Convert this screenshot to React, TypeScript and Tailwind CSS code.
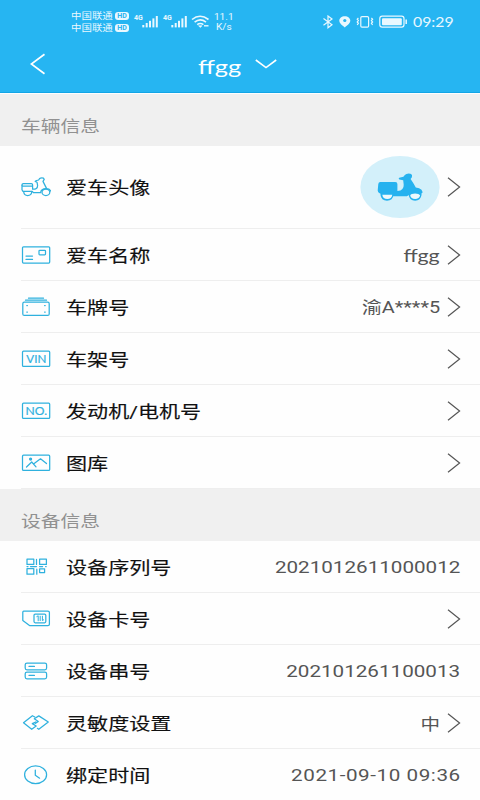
import type { ReactNode } from 'react';
import clsx from 'clsx';

type Row = {
  label: string;
  icon: ReactNode;
  value?: string;
  valueClass?: string;
  link?: boolean;
};

function LineIcon({ children }: { children: ReactNode }) {
  return (
    <svg
      viewBox="0 0 30 24"
      className="w-[30px] h-6 shrink-0"
      fill="none"
      stroke="#2fb1de"
      strokeWidth="1.25"
      strokeLinecap="round"
      strokeLinejoin="round"
    >
      {children}
    </svg>
  );
}

function Arrow() {
  return (
    <svg viewBox="0 0 14 20" className="w-[14px] h-5 ml-[7px] shrink-0" fill="none" stroke="#555" strokeWidth="1.2">
      <path d="M1 0.8 L12.6 10 L1 19.2" />
    </svg>
  );
}

const frame = <rect x="1.5" y="4.2" width="27.2" height="15.2" rx="1" />;

const vehicleRows: Row[] = [
  {
    label: '爱车名称',
    value: 'ffgg',
    valueClass: 'pt-0.5 text-[17.5px] scale-x-[1.22] font-[Lato,sans-serif]',
    link: true,
    icon: (
      <LineIcon>
        <rect x="1.5" y="3.8" width="27.2" height="16.2" rx="1" />
        <rect x="18" y="7.3" width="6.5" height="4.6" rx="0.8" />
        <path d="M5 13h6.5M5 16.4h6.5" />
      </LineIcon>
    ),
  },
  {
    label: '车牌号',
    value: '渝A****5',
    valueClass: 'pt-1 text-[16.3px] scale-x-[1.22]',
    link: true,
    icon: (
      <LineIcon>
        <rect x="1.8" y="7.2" width="26.4" height="13.2" rx="1.5" />
        <path d="M4.5 5.2h21M7.5 3.2h15" />
        <path d="M5.8 10.5h.6M23.6 10.5h.6M5.8 17h.6M23.6 17h.6" />
      </LineIcon>
    ),
  },
  {
    label: '车架号',
    link: true,
    icon: (
      <LineIcon>
        {frame}
        <text x="15.3" y="15.7" textAnchor="middle" textLength="20" lengthAdjust="spacingAndGlyphs" fontFamily="Lato, sans-serif" fontSize="11" fill="#2fb1de" strokeWidth="0.2">VIN</text>
      </LineIcon>
    ),
  },
  {
    label: '发动机/电机号',
    link: true,
    icon: (
      <LineIcon>
        {frame}
        <text x="15.3" y="15.6" textAnchor="middle" textLength="21.5" lengthAdjust="spacingAndGlyphs" fontFamily="Lato, sans-serif" fontSize="10.8" fill="#2fb1de" strokeWidth="0.2">NO.</text>
      </LineIcon>
    ),
  },
  {
    label: '图库',
    link: true,
    icon: (
      <LineIcon>
        {frame}
        <circle cx="9.6" cy="8" r="1" fill="#2fb1de" />
        <path d="M5.5 16L10.7 11L15 15.8M12.5 13L19.5 7.8L25.5 12.6" />
      </LineIcon>
    ),
  },
];

const deviceRows: Row[] = [
  {
    label: '设备序列号',
    value: '2021012611000012',
    valueClass: 'pt-1 mr-px text-[16.5px] scale-x-[1.25]',
    icon: (
      <LineIcon>
        <rect x="6" y="4.2" width="6.8" height="5.2" />
        <rect x="18.6" y="4.2" width="6.8" height="5.2" />
        <rect x="6" y="13.6" width="6.8" height="5.6" />
        <rect x="18.6" y="13.8" width="5" height="3.8" />
        <path d="M15.5 4.4v5M6 11.6h1M9.5 11.6h6M18.6 11.6h3M24.6 11.6h.6M15.8 14.2v5" />
      </LineIcon>
    ),
  },
  {
    label: '设备卡号',
    link: true,
    icon: (
      <LineIcon>
        <path d="M2.7 4.2h24.2q1.5 0 1.5 1.3v11.7q0 1.3-1.5 1.3H8.5L1.8 13.4V5.2q0-1 .9-1z" />
        <rect x="13" y="7" width="11.8" height="8.8" rx="1.2" />
        <path d="M15.8 9.6l1.4-.8v5M19.2 9.2v4.4M21.4 9.2v4.4l1.2-.8" strokeWidth="1" />
      </LineIcon>
    ),
  },
  {
    label: '设备串号',
    value: '202101261100013',
    valueClass: 'pt-1 mr-px text-[16.5px] scale-x-[1.25]',
    icon: (
      <LineIcon>
        <rect x="4.2" y="4" width="21.4" height="6.8" rx="1.8" />
        <rect x="4.2" y="13" width="21.4" height="6.8" rx="1.8" />
        <path d="M8 7.4h5.4M8 16.4h5.4" />
      </LineIcon>
    ),
  },
  {
    label: '灵敏度设置',
    value: '中',
    valueClass: 'pt-1 text-[16px] scale-x-[1.22]',
    link: true,
    icon: (
      <LineIcon>
        <path d="M13.8 6L11.4 4.7L2.5 11.7L10.7 18.3L15.2 15L11.3 12.6L14.7 11" />
        <path d="M13.3 7.8L17.8 4.9L27.3 11L17.8 18.3L16.4 17.3M13.3 7.8L17.3 10.4L14.2 12.4" />
      </LineIcon>
    ),
  },
  {
    label: '绑定时间',
    value: '2021-09-10 09:36',
    valueClass: 'pt-1 text-[16.5px] tracking-[0.45px] scale-x-[1.25]',
    icon: (
      <LineIcon>
        <ellipse cx="14.6" cy="11.7" rx="11" ry="8.9" />
        <path d="M14.3 7v5.2l4.3 3" />
      </LineIcon>
    ),
  },
];

function Label({ children }: { children: ReactNode }) {
  return (
    <span className="ml-[15px] pt-[3px] origin-left scale-x-[1.24] whitespace-nowrap text-[17px] leading-none text-[#111] [-webkit-text-stroke:0.15px_#111]">
      {children}
    </span>
  );
}

function ListRow({ label, icon, value, valueClass, link }: Row) {
  return (
    <div className="ml-[21px] pr-[19px] h-[52px] flex items-center border-b border-[#eeeeee]">
      {icon}
      <Label>{label}</Label>
      <span className="flex-1" />
      {value && (
        <span className={clsx('origin-right whitespace-nowrap leading-none text-[#555]', valueClass)}>{value}</span>
      )}
      {link && <Arrow />}
    </div>
  );
}

function SectionTitle({ children }: { children: ReactNode }) {
  return (
    <div className="bg-[#f0f0f0] pl-[21px] pt-[13px] flex items-center h-[52px]">
      <span className="origin-left scale-x-[1.235] text-[16px] leading-none text-[#919191]">{children}</span>
    </div>
  );
}

function Signal() {
  return (
    <div className="flex items-start w-[25px]">
      <span className="w-2 text-[7px] font-bold leading-none">4G</span>
      <svg viewBox="0 0 17 13" className="w-[17px] h-[13px] shrink-0" fill="#e9f8ff">
        <rect x="0.3" y="10" width="2" height="2.4" />
        <rect x="3.7" y="8" width="2" height="4.4" />
        <rect x="7" y="5.8" width="2" height="6.6" />
        <rect x="10.4" y="3.4" width="2" height="9" />
        <rect x="13.8" y="1" width="2" height="11.4" />
      </svg>
    </div>
  );
}

function Carrier() {
  return (
    <div className="flex items-center h-3">
      <span className="w-[44px] text-[9px] leading-none whitespace-nowrap">
        <span className="inline-block origin-left scale-x-[1.16]">中国联通</span>
      </span>
      <span className="w-[14px] h-2 rounded-[3px] bg-[#e9f8ff] text-[#28b4f0] text-[7px] font-bold leading-[8px] text-center">
        HD
      </span>
    </div>
  );
}

function StatusBar() {
  return (
    <div className="h-10 pl-[71px] pr-[26px] flex items-start text-[#e9f8ff]">
      <div className="pt-[10px]">
        <Carrier />
        <Carrier />
      </div>
      <div className="flex pt-[15px] pl-[5px] gap-[4px]">
        <Signal />
        <Signal />
      </div>
      <svg viewBox="0 0 19 14" className="w-[19px] h-[14px] mt-[15px] ml-[3px]" fill="none" stroke="#e9f8ff" strokeWidth="1.6">
        <path d="M1 4.5Q9 -2 17.5 4.5M3.6 7.2Q9.2 2.6 15 7.2M6.2 9.7Q9.2 7.3 12.4 9.7" />
        <path d="M7.6 10.8h3.4L9.3 12.4z" fill="#e9f8ff" strokeWidth="0.6" />
        <path d="M13 10.8h4.5" strokeWidth="1.4" />
      </svg>
      <div className="ml-[4px] pt-[12px] w-[20px] text-center text-[9px] leading-[10px]">
        <span className="inline-block scale-x-[1.12]">
          11.1
          <br />
          K/s
        </span>
      </div>
      <span className="flex-1" />
      <svg viewBox="0 0 86 14" className="w-[86px] h-[14px] mt-[15px] mr-[5px]" fill="none" stroke="#e9f8ff" strokeWidth="1.2">
        <path d="M1.5 3.6L10 9.7L6 12.8V1L10 4L1.5 10.3" />
        <path d="M22.8 1.2C26 1.2 28.3 3.2 28.3 5.6C28.3 8.4 25.5 10.2 22.8 12.4C20 10.2 17.3 8.4 17.3 5.6C17.3 3.2 19.6 1.2 22.8 1.2z" fill="#e9f8ff" stroke="none" />
        <circle cx="22.8" cy="5.5" r="1.6" fill="#28b4f0" stroke="none" />
        <rect x="38.8" y="1.6" width="7.8" height="10.6" rx="1.2" />
        <path d="M36.4 3l-1.2 1.2 1.2 1.4-1.2 1.4 1.2 1.4-1.2 1.6M49.4 3l1.2 1.2-1.2 1.4 1.2 1.4-1.2 1.4 1.2 1.6" />
        <rect x="57.8" y="1.2" width="24.2" height="11" rx="2.4" />
        <rect x="60" y="3.2" width="19.8" height="7" rx="1" fill="#e9f8ff" stroke="none" />
        <path d="M84.2 4.5v4.6" strokeWidth="1.5" />
      </svg>
      <span className="w-[41px] pt-[14px] text-[14px] leading-[15px]">
        <span className="inline-block origin-left scale-x-[1.13] font-[Lato,sans-serif]">09:29</span>
      </span>
    </div>
  );
}

export default function App() {
  return (
    <div className="w-[480px] h-[800px] overflow-hidden bg-[#fefefe] font-[Roboto,'Noto_Sans_CJK_SC',sans-serif]">
      {/* Header */}
      <header className="h-[93px] bg-[#26b5f2] border-b border-[#13a5e6]">
        <StatusBar />
        <nav className="h-[50px] flex items-center text-white">
          <svg viewBox="0 0 16 22" className="w-4 h-[22px] ml-[30px] -mt-[2px]" fill="none" stroke="white" strokeWidth="1.7">
            <path d="M14.5 1.2L1.3 11L14.5 20.8" />
          </svg>
          <span className="ml-[152px] pt-[3px] w-[44px] text-[20px] leading-none">
            <span className="inline-block origin-left scale-x-[1.27] font-[Lato,sans-serif]">ffgg</span>
          </span>
          <svg viewBox="0 0 22 10" className="w-[22px] h-[10px] ml-[13px] -mt-[3px]" fill="none" stroke="white" strokeWidth="1.6">
            <path d="M0.8 1L11 8.6L21.2 1" />
          </svg>
        </nav>
      </header>

      {/* Vehicle info */}
      <div className="pt-px">
        <SectionTitle>车辆信息</SectionTitle>
      </div>
      <div className="ml-[21px] pr-[19px] h-[83px] flex items-center border-b border-[#eeeeee]">
        <LineIcon>
          <path d="M1 10.2q0-1.5 1.3-1.5h8.1q1.2 0 1.2 1.3v4.2q5 .3 5-3.8L16 7.2l-1.8-.8 1.4-.9 2-.5 1-1.4q1.7-1.1 3.8-.4l.8 1.2-1.2 2 3.5 7" />
          <path d="M1.2 11h10M1 10.2v4.5l.8 1.6h9.5l1 1.3h7.3c.3-2.6 2.4-4.1 5.4-4.1 2.4 0 4.2 1 4.7 2.6" />
          <path d="M2.6 16.5q.5 4.1 4.1 4.1t4.2-4.1" />
          <ellipse cx="24.9" cy="17.3" rx="3.9" ry="3.3" />
        </LineIcon>
        <Label>爱车头像</Label>
        <span className="flex-1" />
        <svg viewBox="0 0 80 62" className="w-20 h-[62px]">
          <ellipse cx="40" cy="31" rx="39.6" ry="31" fill="#d3f0fa" />
          <path
            fill="#26b2ef"
            d="M18.3 28q.2-1.9 2-1.9h15q2.1 0 2.1 2V34.9q3.6 0 5-1.9 1.5-1.8 1.3-4.3l-.5-4.5-3.8-.7q-1.4-.8-.2-1.8l4.2-1q1.4-2.3 3-2.8 3-.8 4.7.2 1.5 1 .8 3.1l-1.3 1.8q3 4.2 5.2 8.6 3.8.5 5.7 2.1 1.6 2.5.8 3.4l-2.2.5-11.2 1.3-2 1.3H33.4L20 37.5q-2.3-1-2.3-3z"
          />
          <path d="M20.5 36.5h13v2.6q-.7 5.7-6.5 5.7t-6.5-5.7zM48.7 36.5h12.8v2.6q-.8 5.7-6.4 5.7t-6.4-5.7z" fill="#26b2ef" />
          <path d="M22.3 38.7h10q-.6 4.4-5 4.4t-5-4.4zM50.2 39.3q1-1.7 4.9-1.7t5 1.7q-.8 3.8-5 3.8t-4.9-3.8z" fill="#ecf9fd" />
        </svg>
        <Arrow />
      </div>
      {vehicleRows.map((row) => (
        <ListRow key={row.label} {...row} />
      ))}

      {/* Device info */}
      <SectionTitle>设备信息</SectionTitle>
      {deviceRows.map((row) => (
        <ListRow key={row.label} {...row} />
      ))}
    </div>
  );
}
